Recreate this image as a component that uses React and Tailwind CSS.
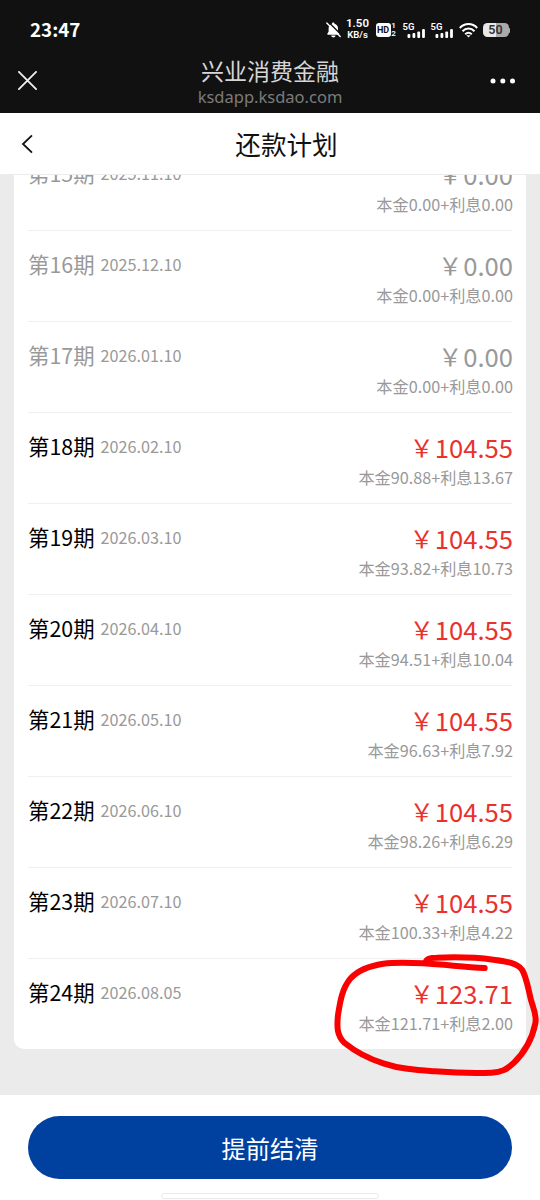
const periods = [
  { no: 15, date: "2025.11.10", amount: "0.00", principal: "0.00", interest: "0.00", paid: true },
  { no: 16, date: "2025.12.10", amount: "0.00", principal: "0.00", interest: "0.00", paid: true },
  { no: 17, date: "2026.01.10", amount: "0.00", principal: "0.00", interest: "0.00", paid: true },
  { no: 18, date: "2026.02.10", amount: "104.55", principal: "90.88", interest: "13.67" },
  { no: 19, date: "2026.03.10", amount: "104.55", principal: "93.82", interest: "10.73" },
  { no: 20, date: "2026.04.10", amount: "104.55", principal: "94.51", interest: "10.04" },
  { no: 21, date: "2026.05.10", amount: "104.55", principal: "96.63", interest: "7.92" },
  { no: 22, date: "2026.06.10", amount: "104.55", principal: "98.26", interest: "6.29" },
  { no: 23, date: "2026.07.10", amount: "104.55", principal: "100.33", interest: "4.22" },
  { no: 24, date: "2026.08.05", amount: "123.71", principal: "121.71", interest: "2.00" },
];

function Signal() {
  return (
    <div className="relative w-[23px] h-[17px]">
      <span className="absolute left-0 top-0 text-[9.5px] leading-[9px] font-semibold">5G</span>
      <svg className="absolute left-[4px] top-[7px]" width="19" height="9" viewBox="0 0 19 9" fill="currentColor">
        <rect x="0.5" y="5" width="2.8" height="4" rx="1" />
        <rect x="5.5" y="4" width="2.8" height="5" rx="1" />
        <rect x="10.3" y="2.5" width="2.8" height="6.5" rx="1" />
        <rect x="15.1" y="0" width="2.8" height="9" rx="1" />
      </svg>
    </div>
  );
}

function StatusBar() {
  return (
    <div className="h-[60px] pl-[30px] pr-[30px] flex items-center justify-between text-white">
      <span className="mt-[-1px] font-['Noto_Sans_CJK_SC',sans-serif] text-[18.8px] leading-none font-bold">23:47</span>
      <div className="flex items-center font-['Roboto',sans-serif]">
        <svg width="15" height="16" viewBox="0 0 15 16" className="mr-[5px]">
          <path
            d="M7.2 0.5C8 .5 8.4 1 8.5 1.7C10.8 2.3 12 4.2 12 6.4V9.8L13.3 11.6V12.7H1.4V11.6L2.6 9.8V6.4C2.6 4.2 3.8 2.3 6 1.7C6.1 1 6.5 .5 7.2 .5Z"
            fill="currentColor"
          />
          <path d="M5.2 13.6H9.5C9.2 15 8.4 15.5 7.3 15.5C6.3 15.5 5.5 15 5.2 13.6Z" fill="currentColor" />
          <path d="M2.4 0L15 12.6" stroke="#111" strokeWidth="1.4" />
          <path d="M0.8 1L14.2 14.4" stroke="currentColor" strokeWidth="1.4" strokeLinecap="round" />
        </svg>
        <div className="w-[24px] mt-[-2px] mr-[6px] flex flex-col items-center font-semibold whitespace-nowrap">
          <span className="text-[11.5px] leading-[11px]">1.50</span>
          <span className="text-[9.5px] leading-[11px]">KB/s</span>
        </div>
        <div className="w-[15px] h-[14px] rounded-[3px] bg-white text-[#111] flex items-center justify-center text-[9px] leading-none font-bold">
          HD
        </div>
        <div className="w-[6px] mr-[6px] flex flex-col items-center text-[8px] leading-[8.5px] font-semibold">
          <span>1</span>
          <span>2</span>
        </div>
        <Signal />
        <div className="w-[5px]" />
        <Signal />
        <svg width="19" height="15" viewBox="0 0 19 15" fill="none" stroke="currentColor" strokeWidth="2" className="ml-[5px] mr-[5px]">
          <path d="M0.8 5C5.8 -0.2 13.2 -0.2 18.2 5" />
          <path d="M3.5 8.2C7 4.6 12 4.6 15.5 8.2" />
          <path d="M6.2 11.2C8.3 9.3 10.7 9.3 12.8 11.2" />
          <path d="M7.4 12.2H11.6L9.5 14.6Z" fill="currentColor" stroke="none" />
        </svg>
        <div className="flex items-center">
          <div className="w-[26px] h-[14px] rounded-[4.5px] bg-linear-to-r from-[#e8e8e8] from-50% to-[#aaa] to-50% flex items-center justify-center text-[12.5px] leading-none font-semibold text-[#333]">
            50
          </div>
          <div className="w-[1.5px] h-[5px] rounded-r bg-[#aaa]" />
        </div>
      </div>
    </div>
  );
}

function WebviewBar() {
  return (
    <div className="h-[53px] pl-[18px] pr-[24px] flex justify-between">
      <svg width="19" height="19" viewBox="0 0 19 19" stroke="#f0f0f0" strokeWidth="1.8" strokeLinecap="round" className="mt-[11px]">
        <path d="M0.9 0.9L18.1 18.1M18.1 0.9L0.9 18.1" />
      </svg>
      <div className="ml-[13px] mt-[-2px] flex flex-col items-center">
        <span className="text-[23px] leading-[24px] text-[#d6d6d6]">兴业消费金融</span>
        <span className="mt-[3px] font-['Noto_Sans',sans-serif] text-[16.5px] leading-[24px] text-[#7c7c7c]">ksdapp.ksdao.com</span>
      </div>
      <svg width="26" height="6" viewBox="0 0 26 6" fill="#fff" className="mt-[18px]">
        <circle cx="3" cy="3" r="2.5" />
        <circle cx="12.8" cy="3" r="2.5" />
        <circle cx="22.5" cy="3" r="2.5" />
      </svg>
    </div>
  );
}

function PeriodRow({ period }) {
  return (
    <li className="h-[91px] border-b border-[#efefef] last:h-[90px] last:border-b-0 flex justify-between">
      <div className="flex items-center h-[66px]">
        <span className={period.paid ? "text-[21.4px] text-[#999]" : "text-[21.4px] text-black"}>
          第{period.no}期
        </span>
        <span className="ml-[6px] text-[16.2px] text-[#999]">{period.date}</span>
      </div>
      <div className="mr-[-1px] flex flex-col items-end pt-[16px]">
        <span
          className={
            period.paid
              ? "flex text-[25.6px] leading-[36px] text-[#999]"
              : "flex text-[25.6px] leading-[36px] text-[#e9322d]"
          }
        >
          <span className="mr-px text-[24px]">￥</span>
          {period.amount}
        </span>
        <span className="text-[16.2px] leading-[24px] text-[#999]">
          本金{period.principal}+利息{period.interest}
        </span>
      </div>
    </li>
  );
}

function App() {
  return (
    <div className="relative w-[540px] h-[1200px] overflow-hidden flex flex-col bg-[#ebebeb] font-['Noto_Sans_CJK_SC',sans-serif]">
      <header className="h-[113px] bg-[#111]">
        <StatusBar />
        <WebviewBar />
      </header>

      <div className="h-[62px] shrink-0 px-5 bg-white border-b border-[#ebebeb] flex items-center">
        <svg width="12" height="20" viewBox="0 0 12 20" fill="none" stroke="#111" strokeWidth="1.8" className="ml-[1px]">
          <path d="M11 1.3L2 10L11 18.7" />
        </svg>
        <h1 className="flex-1 pl-[20px] pt-px text-[25.6px] leading-9 text-center text-[#111]">还款计划</h1>
      </div>

      <main className="h-[920px] shrink-0 overflow-hidden px-[14px]">
        <ul className="mt-[-35px] px-[14px] bg-white rounded-[10px]">
          {periods.map((period) => (
            <PeriodRow key={period.no} period={period} />
          ))}
        </ul>
      </main>

      <footer className="flex-1 bg-white flex flex-col items-center pt-[21px]">
        <button className="w-[484px] h-[63px] pt-[2px] shrink-0 rounded-full bg-[#0041a0] text-[24.2px] text-white">
          提前结清
        </button>
        <div className="mt-[14px] w-[218px] h-[6px] shrink-0 rounded-full border border-[#ebebeb]" />
      </footer>

      {/* hand-drawn marker around the last period */}
      <svg
        className="absolute left-[320px] top-[940px] pointer-events-none"
        width="220"
        height="150"
        viewBox="0 0 660 450"
        fill="none"
        stroke="#fb0000"
        strokeWidth="18"
        strokeLinecap="round"
        strokeLinejoin="round"
      >
        <path d="M494 84C430 81 380 74 310 70C270 68 230 66 190 71C145 78 112 92 91 116C67 145 61 180 54 225C50 262 51 288 74 309C105 334 145 356 190 370C240 387 290 390 345 394C400 398 460 400 515 398C545 397 560 388 580 370C612 339 637 295 646 250C651 225 640 205 633 180C624 145 620 112 606 89C590 67 550 63 520 59C460 51 400 51 350 53C333 53 321 55 318 63" />
      </svg>
    </div>
  );
}

export default App;
